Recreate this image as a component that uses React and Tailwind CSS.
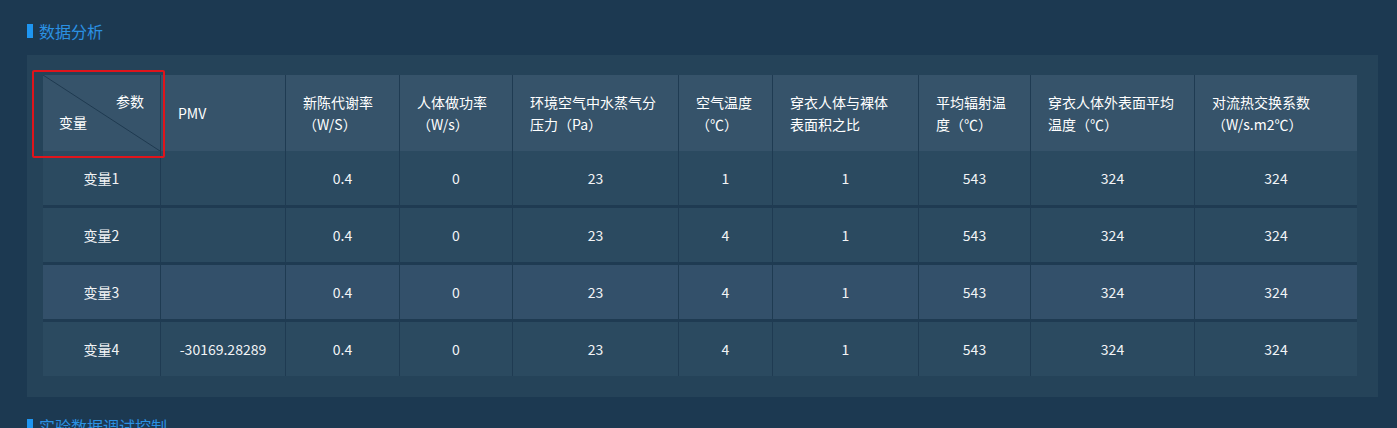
import React from 'react'

const cols = 'grid grid-cols-[117px_125px_114px_113px_166px_94px_146px_112px_164px_163px]'

const headers = [
  ['PMV'],
  ['新陈代谢率', '（W/S）'],
  ['人体做功率', '（W/s）'],
  ['环境空气中水蒸气分', '压力（Pa）'],
  ['空气温度', '（℃）'],
  ['穿衣人体与裸体', '表面积之比'],
  ['平均辐射温', '度（℃）'],
  ['穿衣人体外表面平均', '温度（℃）'],
  ['对流热交换系数', '（W/s.m2℃）'],
]

const rows = [
  { name: '变量1', pmv: '', vals: ['0.4', '0', '23', '1', '1', '543', '324', '324'] },
  { name: '变量2', pmv: '', vals: ['0.4', '0', '23', '4', '1', '543', '324', '324'] },
  { name: '变量3', pmv: '', vals: ['0.4', '0', '23', '4', '1', '543', '324', '324'], light: true },
  { name: '变量4', pmv: '-30169.28289', vals: ['0.4', '0', '23', '4', '1', '543', '324', '324'] },
]

function Title({ children }) {
  return (
    <div className="flex items-center h-[22px]">
      <span className="w-[6px] h-[14px] bg-[#1e96f2] mr-[6px]" />
      <span className="text-[16px] text-[#2b91e3] leading-[22px]">{children}</span>
    </div>
  )
}

export default function App() {
  return (
    <div className="min-h-screen bg-[#1c3951] pl-[27px] pr-[19px] pt-[20px] font-['Noto_Sans_CJK_SC',sans-serif] [text-spacing-trim:space-all] overflow-hidden">
      <Title>数据分析</Title>

      <div className="mt-[13px] bg-[#254359] pt-[20px] pl-[16px] pr-[21px] pb-[21px]">
        <div className="relative w-[1314px]">
          {/* 表头 */}
          <div className={`${cols} h-[76px] bg-[#36536a] text-white text-[14px] leading-[22px]`}>
            <div className="relative">
              <svg className="absolute inset-0 w-full h-full" preserveAspectRatio="none" viewBox="0 0 117 76">
                <line x1="0" y1="0" x2="117" y2="76" stroke="#1f3a50" strokeWidth="1" />
              </svg>
              <span className="absolute right-[16px] top-[15px]">参数</span>
              <span className="absolute left-[16px] bottom-[18px]">变量</span>
            </div>
            {headers.map((h, i) => (
              <div key={i} className="flex flex-col justify-center pl-[17px] border-l border-[#1f3b52]">
                {h.map((line, j) => (
                  <span key={j} className="whitespace-nowrap">{line}</span>
                ))}
              </div>
            ))}
          </div>

          {/* 数据行 */}
          {rows.map((r, i) => (
            <div
              key={r.name}
              className={`${cols} h-[54px] text-[14px] text-[#f2f4f6] ${r.light ? 'bg-[#33506a]' : 'bg-[#2b4a60]'} ${i > 0 ? 'border-t-[3px] border-[#1f3b52] h-[57px]' : ''}`}
            >
              <div className="flex items-center justify-center">{r.name}</div>
              <div className="flex items-center justify-center border-l border-[#1f3b52]">{r.pmv}</div>
              {r.vals.map((v, j) => (
                <div key={j} className="flex items-center justify-center border-l border-[#1f3b52]">{v}</div>
              ))}
            </div>
          ))}

          {/* 选中框 */}
          <div className="absolute left-[-11px] top-[-5px] w-[133px] h-[88px] border-2 border-[#e0141b] rounded-[2px] pointer-events-none" />
        </div>
      </div>

      <div className="mt-[18px]">
        <Title>实验数据调试控制</Title>
      </div>
    </div>
  )
}
